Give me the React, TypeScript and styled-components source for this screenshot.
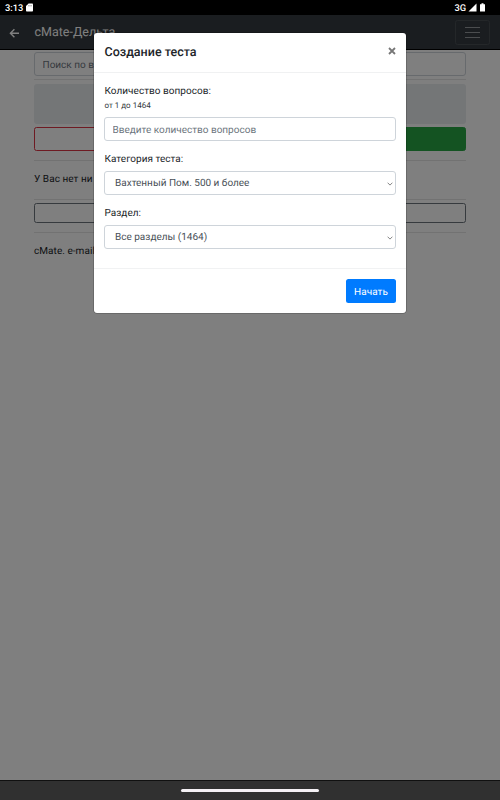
import React from "react";
import styled, { createGlobalStyle } from "styled-components";

const GlobalStyle = createGlobalStyle`
  * { box-sizing: border-box; }
  body { margin: 0; background: #fff; font-family: Roboto, "Noto Sans", sans-serif; color: #212529; text-rendering: geometricPrecision; }
  button, input, select { font-family: inherit; margin: 0; text-rendering: inherit; }
`;

const Screen = styled.div`
  width: 500px;
  height: 800px;
  display: flex;
  flex-direction: column;
  overflow: hidden;
`;

const StatusBar = styled.header`
  height: 15px;
  flex: none;
  display: flex;
  align-items: center;
  justify-content: space-between;
  padding: 0 14px 0 5px;
  background: #000;
  color: #fff;
  font-size: 9.3px;
  font-weight: 500;
  line-height: 15px;
`;

const StatusText = styled.span`
  padding-top: 1px;
`;

const StatusGroup = styled.div<{ $gap: number }>`
  display: flex;
  align-items: center;
  gap: ${(p) => p.$gap}px;
`;

const Viewport = styled.main`
  position: relative;
  flex: 1;
  background: #fff;
`;

const Navbar = styled.nav`
  height: 35px;
  display: flex;
  align-items: center;
  padding: 0 10px 0 9px;
  background: #343a40;
  border-bottom: 1px solid #000;
`;

const Brand = styled.span`
  margin-left: 14.5px;
  padding-top: 2px;
  flex: 1;
  font-size: 12.5px;
  line-height: 18px;
  color: #fff;
`;

const Toggler = styled.button`
  width: 35px;
  height: 25px;
  padding: 0;
  display: flex;
  align-items: center;
  justify-content: center;
  background: transparent;
  border: 1px solid #484e53;
  border-radius: 2.5px;
`;

const Content = styled.div`
  display: flex;
  flex-direction: column;
  padding: 2px 34px 0;
`;

const TextInput = styled.input`
  height: 24px;
  padding: 2px 7.5px 0;
  border: 1px solid #ced4da;
  border-radius: 3px;
  font-size: 10px;
  background: #fff;
  &::placeholder { color: #6c757d; opacity: 1; }
`;

const Rule = styled.hr<{ $top: number; $bottom: number }>`
  width: 100%;
  height: 1px;
  border: 0;
  background: #e5e5e5;
  margin: ${(p) => p.$top}px 0 ${(p) => p.$bottom}px;
`;

const Jumbotron = styled.div`
  height: 40px;
  border-radius: 3px;
  background: #e9ecef;
`;

const ButtonRow = styled.div`
  display: grid;
  grid-template-columns: 1fr 1fr;
  margin-top: 3px;
`;

const BlockButton = styled.button<{ $border: string; $fill?: string; $height: number }>`
  height: ${(p) => p.$height}px;
  padding: 0;
  border: 1px solid ${(p) => p.$border};
  border-radius: 2.5px;
  background: ${(p) => p.$fill ?? "transparent"};
`;

const Paragraph = styled.p`
  margin: 0;
  font-size: 10px;
  line-height: 15px;
  letter-spacing: 0.05px;
`;

const Backdrop = styled.div`
  position: absolute;
  inset: 0;
  display: flex;
  justify-content: center;
  align-items: flex-start;
  padding-top: 18px;
  background: rgba(0, 0, 0, 0.5);
`;

const Dialog = styled.section`
  width: 312px;
  height: 280px;
  display: flex;
  flex-direction: column;
  background: #fff;
  border-radius: 3px;
  box-shadow: 0 0 0 0.5px rgba(0, 0, 0, 0.35);
`;

const DialogHeader = styled.div`
  height: 40px;
  display: flex;
  justify-content: space-between;
  align-items: center;
  padding: 0 10px 0 10.5px;
  border-bottom: 1px solid #f0f1f2;
`;

const DialogTitle = styled.h5`
  margin: 0;
  font-size: 12.5px;
  font-weight: 500;
  line-height: 18px;
  color: #212529;
`;

const Close = styled.button`
  width: 9px;
  height: 14px;
  padding: 0;
  display: flex;
  align-items: center;
  justify-content: center;
  border: 0;
  background: none;
  margin-top: -3px;
`;

const DialogBody = styled.div`
  flex: 1;
  display: flex;
  flex-direction: column;
  padding: 10px 10px 0;
`;

const Field = styled.div`
  display: flex;
  flex-direction: column;
  margin-bottom: 10px;
`;

const Label = styled.label`
  padding: 1px 0 0 0.5px;
  font-size: 10px;
  line-height: 15px;
  letter-spacing: 0.03px;
  margin-bottom: 4px;
`;

const Hint = styled.small`
  font-size: 8px;
  line-height: 12px;
  margin: -3px 0 5px 0.5px;
  color: #343a40;
`;

const SelectBox = styled.div`
  height: 24px;
  display: flex;
  align-items: center;
  justify-content: space-between;
  padding: 1px 2px 0 10px;
  border: 1px solid #ced4da;
  border-radius: 3px;
  font-size: 10px;
  color: #495057;
`;

const DialogFooter = styled.div`
  height: 45px;
  display: flex;
  justify-content: flex-end;
  align-items: center;
  padding: 0 10px;
  border-top: 1px solid #f1f2f3;
`;

const Primary = styled.button`
  width: 50px;
  height: 24px;
  padding: 2px 0 0;
  border: 0;
  border-radius: 2.5px;
  background: #007bff;
  color: #fff;
  font-size: 10px;
  letter-spacing: 0.05px;
`;

const GestureBar = styled.footer`
  height: 20px;
  flex: none;
  display: flex;
  align-items: center;
  justify-content: center;
  background: #303030;
  border-top: 1px solid #101010;
`;

const GestureHandle = styled.div`
  width: 138px;
  height: 3px;
  border-radius: 2px;
  background: #f4f0f4;
`;

const Chevron = () => (
  <svg width="6" height="4" viewBox="0 0 6 4" fill="none" stroke="#666" strokeWidth="0.8">
    <path d="M0.6 0.7 L3 3.1 L5.4 0.7" />
  </svg>
);

export default function App() {
  return (
    <>
      <GlobalStyle />
      <Screen>
        <StatusBar>
          <StatusGroup $gap={3}>
            <StatusText>3:13</StatusText>
            <svg width="7" height="9" viewBox="0 0 7 9">
              <path d="M2.6 0.5H6.2Q7 0.5 7 1.3V7.7Q7 8.5 6.2 8.5H0.8Q0 8.5 0 7.7V3Z" fill="#fff" />
              <path d="M2.7 2v1.4M4 2v1.4M5.3 2v1.4" stroke="#777" strokeWidth="0.6" />
            </svg>
          </StatusGroup>
          <StatusGroup $gap={2}>
            <StatusText>3G</StatusText>
            <svg width="9" height="9" viewBox="0 0 9 9">
              <path d="M8.5 0.5V8.5H0.5Z" fill="#fff" />
            </svg>
            <svg width="7" height="9" viewBox="0 0 7 9">
              <path d="M2.5 0.3H4.5V1.2H6V8.5H1V1.2H2.5Z" fill="#fff" />
            </svg>
          </StatusGroup>
        </StatusBar>

        <Viewport>
          <Navbar>
            <svg width="11" height="11" viewBox="0 0 11 11" fill="none" stroke="#fff" strokeWidth="1.4">
              <path d="M10 6.3H1.5M5.4 2.3L1.4 6.3L5.4 10.3" />
            </svg>
            <Brand>cMate-Дельта</Brand>
            <Toggler aria-label="Menu">
              <svg width="15" height="12" viewBox="0 0 15 12" stroke="#969a9e" strokeWidth="1">
                <path d="M0 1.5H15M0 6.5H15M0 11.5H15" />
              </svg>
            </Toggler>
          </Navbar>

          <Content>
            <TextInput placeholder="Поиск по в" />
            <Rule $top={3} $bottom={4} />
            <Jumbotron />
            <ButtonRow>
              <BlockButton $height={24} $border="#dc3545" />
              <BlockButton $height={24} $border="#28a745" $fill="#28a745" />
            </ButtonRow>
            <Rule $top={9} $bottom={11} />
            <Paragraph>У Вас нет ни</Paragraph>
            <Rule $top={12} $bottom={3} />
            <BlockButton $height={20} $border="#6c757d" />
            <Rule $top={9} $bottom={11} />
            <Paragraph>cMate. e-mail</Paragraph>
          </Content>

          <Backdrop>
            <Dialog role="dialog">
              <DialogHeader>
                <DialogTitle>Создание теста</DialogTitle>
                <Close aria-label="Закрыть">
                  <svg width="8" height="8" viewBox="0 0 8 8" stroke="#777" strokeWidth="1.8">
                    <path d="M1 1L7 7M7 1L1 7" />
                  </svg>
                </Close>
              </DialogHeader>
              <DialogBody>
                <Field>
                  <Label>Количество вопросов:</Label>
                  <Hint>от 1 до 1464</Hint>
                  <TextInput placeholder="Введите количество вопросов" />
                </Field>
                <Field>
                  <Label>Категория теста:</Label>
                  <SelectBox>
                    Вахтенный Пом. 500 и более
                    <Chevron />
                  </SelectBox>
                </Field>
                <Field>
                  <Label>Раздел:</Label>
                  <SelectBox>
                    Все разделы (1464)
                    <Chevron />
                  </SelectBox>
                </Field>
              </DialogBody>
              <DialogFooter>
                <Primary>Начать</Primary>
              </DialogFooter>
            </Dialog>
          </Backdrop>
        </Viewport>

        <GestureBar>
          <GestureHandle />
        </GestureBar>
      </Screen>
    </>
  );
}
